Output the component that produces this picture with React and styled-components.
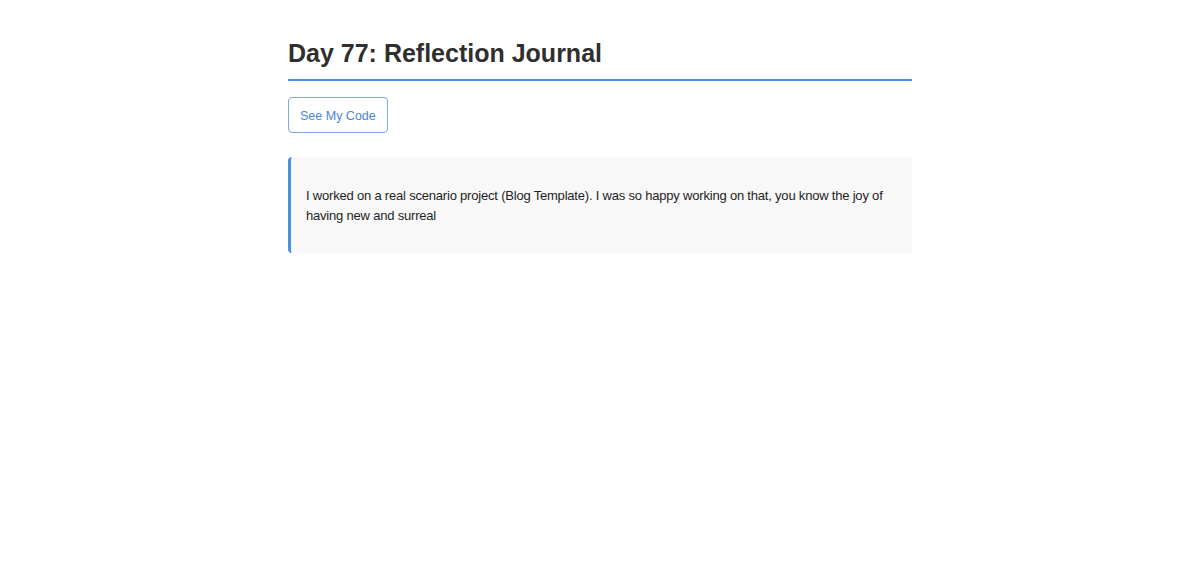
import React from "react";
import styled, { createGlobalStyle } from "styled-components";

const Global = createGlobalStyle`
  html, body { margin: 0; padding: 0; background: #fff; }
  body { font-family: "Liberation Sans", Arial, sans-serif; color: #333; }
`;

const Container = styled.main`
  width: 624px;
  margin: 0 auto;
  padding-top: 38px;
`;

const Title = styled.h1`
  margin: 0;
  font-size: 25px;
  font-weight: 700;
  color: #2f2f2f;
  padding-bottom: 11px;
  border-bottom: 2px solid #4a90e2;
  line-height: 30px;
`;

const CodeButton = styled.a`
  display: flex;
  width: fit-content;
  align-items: center;
  justify-content: center;
  margin-top: 16px;
  height: 36px;
  padding: 1px 11px 0;
  box-sizing: border-box;
  border: 1px solid #7ea8e6;
  border-radius: 4px;
  color: #4a86d8;
  font-size: 12.5px;
  text-decoration: none;
`;

const Entry = styled.section`
  margin-top: 24px;
  background: #f8f8f8;
  border-left: 3px solid #4a90e2;
  border-radius: 4px;
  padding: 13px 16px 11px 15px;
`;

const EntryText = styled.p`
  margin: 16px 0;
  font-size: 13px;
  line-height: 20px;
  letter-spacing: -0.2px;
  color: #1e1e1e;
`;

export default function App() {
  return (
    <>
      <Global />
      <Container>
        <Title>Day 77: Reflection Journal</Title>
        <CodeButton href="#">See My Code</CodeButton>
        <Entry>
          <EntryText>
            I worked on a real scenario project (Blog Template). I was so happy working on that, you know the joy of having new and surreal
          </EntryText>
        </Entry>
      </Container>
    </>
  );
}
